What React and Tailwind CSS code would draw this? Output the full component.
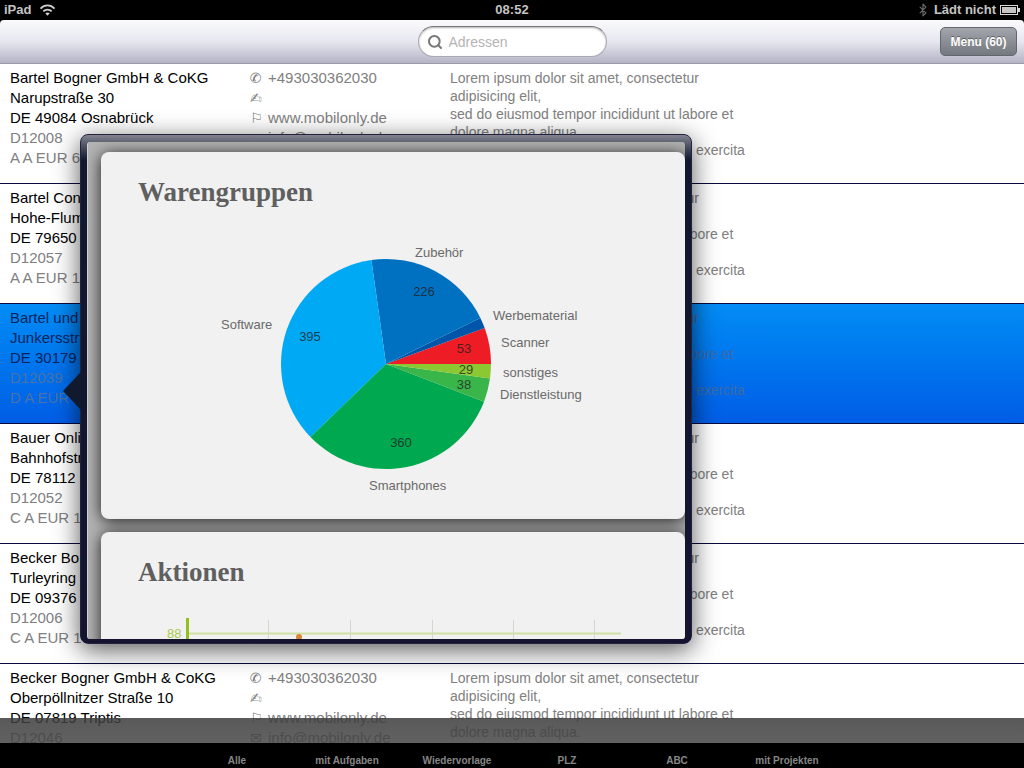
import React, { useState } from 'react'
import { Bluetooth, Search } from 'lucide-react'

const NOTE = [
  'Lorem ipsum dolor sit amet, consectetur adipisicing elit,',
  'sed do eiusmod tempor incididunt ut labore et dolore magna aliqua.',
  'Ut enim ad minim veniam, quis nostrud exercita',
]

const addresses = [
  { name: 'Bartel Bogner GmbH & CoKG', street: 'Narupstraße 30', city: 'DE 49084 Osnabrück', no: 'D12008', rating: 'A A EUR 6' },
  { name: 'Bartel Con', street: 'Hohe-Flum', city: 'DE 79650', no: 'D12057', rating: 'A A EUR 1' },
  { name: 'Bartel und', street: 'Junkersstr', city: 'DE 30179', no: 'D12039', rating: 'D A EUR' },
  { name: 'Bauer Onli', street: 'Bahnhofstr', city: 'DE 78112', no: 'D12052', rating: 'C A EUR 1' },
  { name: 'Becker Bo', street: 'Turleyring', city: 'DE 09376', no: 'D12006', rating: 'C A EUR 1' },
  { name: 'Becker Bogner GmbH & CoKG', street: 'Oberpöllnitzer Straße 10', city: 'DE 07819 Triptis', no: 'D12046', rating: 'A A EUR 1' },
]

const tabs = ['Alle', 'mit Aufgaben', 'Wiedervorlage', 'PLZ', 'ABC', 'mit Projekten']

// angles in degrees, counter-clockwise from east
const slices = [
  { from: 0, to: 20, color: '#ee1c24' },
  { from: 20, to: 26, color: '#0055a8' },
  { from: 26, to: 98, color: '#0071c1' },
  { from: 98, to: 224, color: '#00a9f4' },
  { from: 224, to: 339, color: '#00a84f' },
  { from: 339, to: 352, color: '#39b54a' },
  { from: 352, to: 360, color: '#8cc832' },
]

const pieLabels = [
  { text: 'Zubehör', x: 314, y: 25 },
  { text: 'Werbematerial', x: 392, y: 88 },
  { text: 'Scanner', x: 400, y: 115 },
  { text: 'sonstiges', x: 402, y: 145 },
  { text: 'Dienstleistung', x: 399, y: 167 },
  { text: 'Smartphones', x: 268, y: 258 },
  { text: 'Software', x: 120, y: 97 },
]

const pieValues = [
  { text: '395', x: 209, y: 109 },
  { text: '226', x: 323, y: 64 },
  { text: '53', x: 363, y: 121 },
  { text: '29', x: 365, y: 142 },
  { text: '38', x: 363, y: 157 },
  { text: '360', x: 300, y: 215 },
]

function slicePath({ from, to }) {
  const cx = 285, cy = 132, r = 105
  const pt = (deg) => {
    const a = (deg * Math.PI) / 180
    return `${cx + r * Math.cos(a)} ${cy - r * Math.sin(a)}`
  }
  return `M${cx} ${cy}L${pt(from)}A${r} ${r} 0 ${to - from > 180 ? 1 : 0} 0 ${pt(to)}Z`
}

function StatusBar() {
  return (
    <div className="grid h-5 shrink-0 grid-cols-3 items-center bg-black px-1 text-[13px] leading-5 font-bold text-[#c4c4c4]">
      <div className="flex items-center gap-2">
        <span>iPad</span>
        <svg className="h-3 w-[17px]" viewBox="0 0 16 12" fill="none" stroke="#d0d0d0" strokeWidth="1.8">
          <path d="M1 4.600C5 .4 11 .4 15 4.600" />
          <path d="M3.800 7.400c2.400-2.500 6-2.500 8.400 0" />
          <path d="M5.800 9.200 8 11.800l2.200-2.600c-1.300-1.100-3.100-1.100-4.400 0z" fill="#d0d0d0" stroke="none" />
        </svg>
      </div>
      <div className="text-center">08:52</div>
      <div className="flex items-center justify-end gap-1">
        <Bluetooth className="h-[14px] w-[14px] text-[#6a6a6a]" strokeWidth={2} />
        <span>Lädt nicht</span>
        <svg className="h-3 w-5" viewBox="0 0 20 12">
          <rect x="0.5" y="1.5" width="17" height="9" fill="none" stroke="#d8d8d8" />
          <rect x="2" y="3" width="14" height="6" fill="#c4c4c4" />
          <path d="M18 4h2v4h-2z" fill="#d8d8d8" />
        </svg>
      </div>
    </div>
  )
}

function Toolbar() {
  return (
    <div className="shrink-0 bg-black">
      <header className="grid h-11 grid-cols-[1fr_auto_1fr] items-center rounded-t border-b border-[#9a9aa8] bg-linear-to-b from-[#fbfbfd] via-[#e6e7ef] to-[#b4b4c6] px-[7px]">
        <label className="col-start-2 flex h-[31px] w-[189px] items-center gap-[6px] rounded-full border border-[#a9a9b4] border-t-[#77777f] bg-white px-2 shadow-[inset_0_1px_2px_rgba(0,0,0,0.3)]">
          <Search className="h-4 w-4 shrink-0 text-[#777]" strokeWidth={3} />
          <input type="search" aria-label="Adressen" placeholder="Adressen" className="w-full min-w-0 bg-transparent text-sm text-black outline-none placeholder:text-[#b4b4b4]" />
        </label>
        <button className="h-[29px] w-[77px] justify-self-end rounded-[5px] border border-[#62666e] bg-linear-to-b from-[#a3a6ac] to-[#74787f] text-xs font-bold text-white [text-shadow:0_-1px_0_rgba(0,0,0,0.4)]">
          Menu (60)
        </button>
      </header>
    </div>
  )
}

function ContactLine({ glyph, children, href }) {
  return (
    <div className="flex h-5 items-center">
      <span className="w-[18px] shrink-0 font-['DejaVu_Sans'] text-sm">{glyph}</span>
      {href && <a href={href}>{children}</a>}
    </div>
  )
}

function AddressRow({ item, selected, onSelect }) {
  return (
    <li
      onClick={onSelect}
      className={`grid h-[120px] grid-cols-[240px_200px_300px] overflow-hidden border-b border-[#0a0a3c] px-[10px] py-1 text-[15px] leading-5 ${selected ? 'bg-linear-to-b from-[#058cf5] to-[#015de6] text-[#06245c]' : 'bg-white text-black'}`}
    >
      <div className="whitespace-nowrap">
        <div>{item.name}</div>
        <div>{item.street}</div>
        <div>{item.city}</div>
        <div className={selected ? 'text-[#4a73a8]' : 'text-[#808080]'}>{item.no}</div>
        <div className={selected ? 'text-[#4a73a8]' : 'text-[#808080]'}>{item.rating}</div>
      </div>
      <div className="text-[#808080]">
        <ContactLine glyph="✆" href="tel:+493030362030">+493030362030</ContactLine>
        <ContactLine glyph="✍" />
        <ContactLine glyph="⚐" href="#www">www.mobilonly.de</ContactLine>
        <ContactLine glyph="✉" href="#mail">info@mobilonly.de</ContactLine>
      </div>
      <div className={`pt-px text-sm leading-[18px] ${selected ? 'text-[#3f6ba6]' : 'text-[#808080]'}`}>
        {NOTE.map((p) => <p key={p}>{p}</p>)}
      </div>
    </li>
  )
}

function PieChart() {
  return (
    <svg className="block h-[264px] w-full" viewBox="0 0 584 264" preserveAspectRatio="xMinYMin meet" fontFamily="Liberation Sans, sans-serif" fontSize="13">
      {slices.map((s) => <path key={s.from} d={slicePath(s)} fill={s.color} />)}
      <g fill="#6a6a6a">
        {pieLabels.map((l) => <text key={l.text} x={l.x} y={l.y}>{l.text}</text>)}
      </g>
      <g fill="#222" fillOpacity="0.8" textAnchor="middle">
        {pieValues.map((v) => <text key={v.text} x={v.x} y={v.y}>{v.text}</text>)}
      </g>
    </svg>
  )
}

function CampaignChart() {
  return (
    <svg className="block h-[120px] w-full" viewBox="0 0 584 120" preserveAspectRatio="xMinYMin meet" fontFamily="Liberation Sans, sans-serif" fontSize="13">
      <path d="M88 21.5H520" stroke="#cfe0a4" strokeWidth="2" />
      <path d="M167.5 8V110M249.5 8V110M331.5 8V110M412.5 8V110M493.5 8V110" stroke="#d3d8cc" />
      <path d="M86.5 6V110" stroke="#93c01f" strokeWidth="3" />
      <text x="66" y="26" fill="#a9c94f">88</text>
      <circle cx="198" cy="25" r="3" fill="#d9853b" />
    </svg>
  )
}

function Card({ title, className, children }) {
  return (
    <section className={`ml-[13px] rounded-lg bg-[#f1f1f1] pt-5 shadow-[0_2px_16px_rgba(0,0,0,0.85)] ${className}`}>
      <h2 className="px-[37px] font-['Liberation_Serif'] text-[27px] leading-10 font-bold text-[#5f5f5f]">{title}</h2>
      {children}
    </section>
  )
}

function Popover() {
  return (
    <div className="absolute top-[70px] left-20 h-[510px] w-[612px] rounded-lg border border-[#23233f] bg-linear-to-b from-[#83838f] via-[#10192e] via-5% to-[#14142f] p-[6px] pt-[7px] pb-1 shadow-[0_6px_26px_rgba(0,0,0,0.65)]">
      <svg className="absolute top-[237px] -left-[18px] h-[38px] w-[18px]" viewBox="0 0 18 38">
        <path d="M18 0 0 19l18 19z" fill="#10192e" />
      </svg>
      <div className="h-full overflow-hidden rounded-[3px] border-l border-[#d0d0d0] bg-[#b4b4b4] pt-[10px]">
        <Card title="Warengruppen" className="h-[367px]">
          <div className="pt-5">
            <PieChart />
          </div>
        </Card>
        <Card title="Aktionen" className="mt-[13px]">
          <div className="pt-5">
            <CampaignChart />
          </div>
        </Card>
      </div>
    </div>
  )
}

function TabBar({ active, onChange }) {
  return (
    <nav className="absolute inset-x-0 bottom-0 flex h-[50px] items-end justify-center bg-[linear-gradient(to_bottom,rgba(60,60,60,0.85)_0,rgba(70,70,70,0.85)_25px,#000_25px)]">
      {tabs.map((t) => (
        <button key={t} onClick={() => onChange(t)} aria-pressed={active === t} className="h-[15px] w-[110px] text-[10px] leading-[15px] font-bold text-[#868686]">
          {t}
        </button>
      ))}
    </nav>
  )
}

export default function App() {
  const [selected, setSelected] = useState(2)
  const [tab, setTab] = useState('Alle')

  return (
    <div className="relative flex h-screen flex-col overflow-hidden bg-white font-['Liberation_Sans',sans-serif]">
      <StatusBar />
      <Toolbar />
      <main className="relative min-h-0 flex-1 overflow-hidden">
        <ul>
          {addresses.map((a, i) => (
            <AddressRow key={a.no} item={a} selected={i === selected} onSelect={() => setSelected(i)} />
          ))}
        </ul>
        <Popover />
      </main>
      <TabBar active={tab} onChange={setTab} />
    </div>
  )
}
